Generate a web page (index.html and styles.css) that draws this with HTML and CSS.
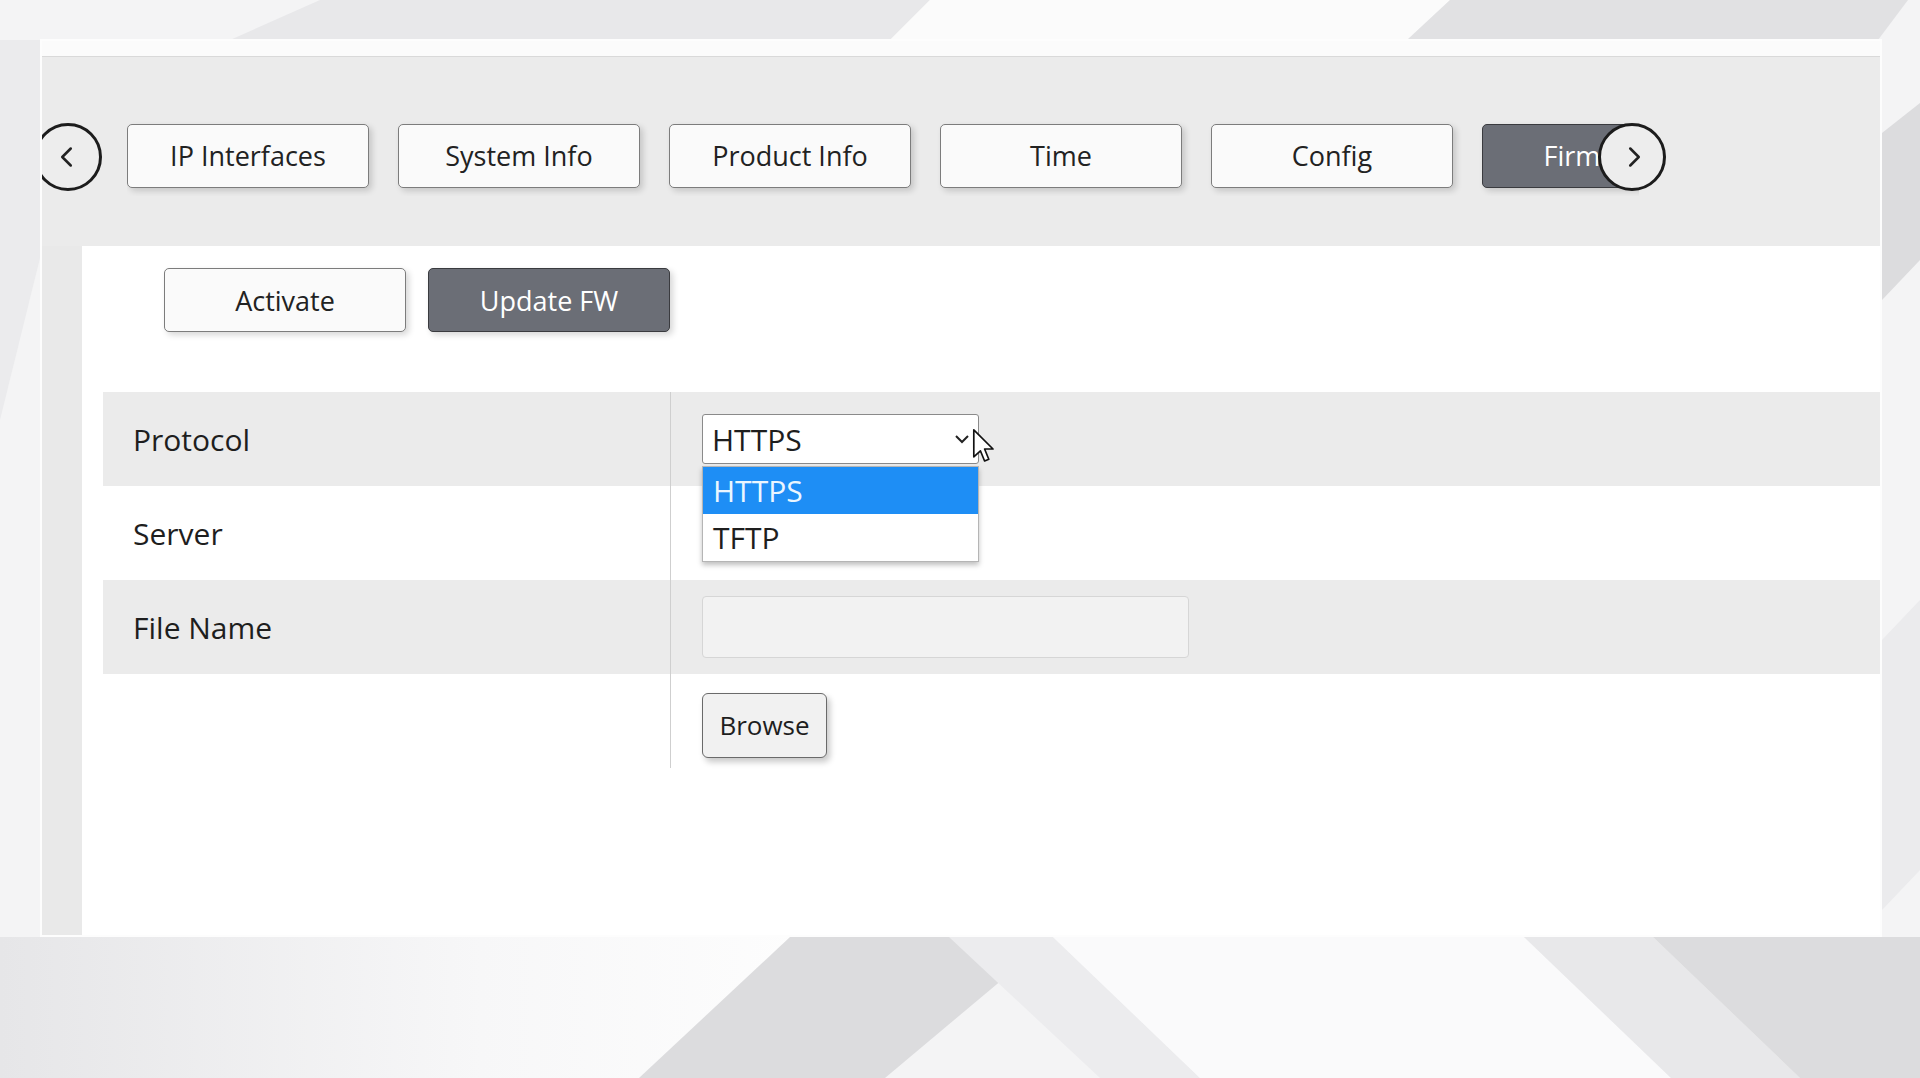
FILE: index.html
```html
<!DOCTYPE html>
<html lang="en">
<head>
  <meta charset="UTF-8" />
  <title>Firmware</title>
  <link rel="stylesheet" href="styles.css">
</head>
<body>
  <!-- decorative backdrop behind the panel -->
  <svg class="backdrop" viewBox="0 0 1920 1078" preserveAspectRatio="none">
    <defs>
      <linearGradient id="fadeL" x1="0" x2="1" y1="0" y2="0">
        <stop offset="0" stop-color="#e6e6e8"/>
        <stop offset="0.6" stop-color="#f7f7f8"/>
        <stop offset="1" stop-color="#fdfdfd"/>
      </linearGradient>
    </defs>
    <rect width="1920" height="1078" fill="#f4f4f5"/>
    <polygon points="230,40 320,0 930,0 890,40" fill="#e8e8ea"/>
    <polygon points="890,40 930,0 1450,0 1407,40" fill="#fbfbfb"/>
    <polygon points="1407,40 1450,0 1908,0 1878,40" fill="#e1e1e3"/>
    <polygon points="1882,133 1920,103 1920,260 1882,300" fill="#dcdcde"/>
    <polygon points="1882,640 1920,600 1920,870 1882,910" fill="#ebebed"/>
    <polygon points="0,40 42,40 42,250 0,420" fill="#ebebed"/>
    <rect x="0" y="937" width="800" height="141" fill="url(#fadeL)"/>
    <polygon points="790,937 1053,937 885,1078 639,1078" fill="#dcdcde"/>
    <polygon points="949,937 1053,937 1200,1078 1100,1078" fill="#ececee"/>
    <polygon points="1053,937 1524,937 1671,1078 1200,1078" fill="#fafafb"/>
    <polygon points="1524,937 1653,937 1800,1078 1671,1078" fill="#e8e8ea"/>
    <polygon points="1653,937 1920,937 1920,1078 1800,1078" fill="#dcdcde"/>
  </svg>

  <div class="panel">
    <div class="panel-top"></div>

    <div class="tabbar">
      <button class="nav-circle nav-prev" title="Previous">
        <svg viewBox="0 0 20 28" width="17" height="24"><polyline points="15,4 5,14 15,24" fill="none" stroke="#222" stroke-width="3" stroke-linecap="round" stroke-linejoin="round"/></svg>
      </button>
      <div class="tabs-viewport">
        <div class="tabs">
          <button class="tab">IP Interfaces</button>
          <button class="tab">System Info</button>
          <button class="tab">Product Info</button>
          <button class="tab">Time</button>
          <button class="tab">Config</button>
          <button class="tab active">Firmware</button>
        </div>
      </div>
      <button class="nav-circle nav-next" title="Next">
        <svg viewBox="0 0 20 28" width="17" height="24"><polyline points="5,4 15,14 5,24" fill="none" stroke="#222" stroke-width="3" stroke-linecap="round" stroke-linejoin="round"/></svg>
      </button>
    </div>

    <div class="content">
      <div class="main">
        <div class="subtabs">
          <button class="tab">Activate</button>
          <button class="tab active">Update FW</button>
        </div>

        <div class="form">
          <div class="row shaded">
            <div class="label">Protocol</div>
            <div class="value">
              <div class="select-wrap">
                <div class="select">
                  <span>HTTPS</span>
                  <svg viewBox="0 0 16 10" width="16" height="10"><polyline points="2,2 8,8 14,2" fill="none" stroke="#222" stroke-width="2"/></svg>
                </div>
                <ul class="options">
                  <li class="selected">HTTPS</li>
                  <li>TFTP</li>
                </ul>
                <svg class="cursor" viewBox="0 0 20 30" width="24" height="36">
                  <path d="M1.5 1.5 L1.5 24 L7 19 L10.5 27.5 L14 26 L10.5 17.5 L17.5 17.5 Z" fill="#fff" stroke="#111" stroke-width="1.4" stroke-linejoin="round"/>
                </svg>
              </div>
            </div>
          </div>
          <div class="row">
            <div class="label">Server</div>
            <div class="value"></div>
          </div>
          <div class="row shaded">
            <div class="label">File Name</div>
            <div class="value"><input class="text-input" type="text"></div>
          </div>
          <div class="row">
            <div class="label"></div>
            <div class="value"><button class="browse-btn">Browse</button></div>
          </div>
        </div>
      </div>
    </div>
  </div>
</body>
</html>
```

FILE: styles.css
```css
body {
  margin: 0;
  width: 1920px;
  height: 1078px;
  overflow: hidden;
  position: relative;
  background: #f4f4f5;
  font-family: "Open Sans", "Noto Sans", sans-serif;
  color: #1e1e1e;
}
.backdrop {
  position: absolute;
  top: 0;
  left: 0;
  width: 1920px;
  height: 1078px;
  z-index: 0;
}
.panel {
  position: relative;
  z-index: 1;
  margin: 39px 0 0 40px;
  width: 1842px;
  height: 898px;
  box-sizing: border-box;
  border: 2px solid #fdfdfd;
  background: #e9e9e9;
  display: flex;
  flex-direction: column;
  overflow: hidden;
}
.panel-top {
  height: 15px;
  background: #fbfbfb;
  border-bottom: 1px solid #d9d9d9;
}
.tabbar {
  height: 189px;
  box-sizing: border-box;
  padding-top: 10px;
  background: #ebebeb;
  display: flex;
  align-items: center;
  overflow: hidden;
}
.nav-circle {
  flex: none;
  width: 68px;
  height: 68px;
  border-radius: 50%;
  border: 3px solid #1c1c1c;
  background: #ededed;
  display: flex;
  align-items: center;
  justify-content: center;
  padding: 0;
  position: relative;
  z-index: 2;
  cursor: pointer;
}
.nav-prev {
  margin-left: -8px;
}
.nav-prev svg {
  margin-left: -4px;
}
.nav-next {
  margin-left: -41px;
}
.nav-next svg {
  margin-left: 4px;
}
.tabs-viewport {
  margin-left: 25px;
  width: 1512px;
  overflow: hidden;
  padding: 6px 0 8px;
}
.tabs {
  display: flex;
  gap: 29px;
}
.tab {
  flex: none;
  width: 242px;
  height: 64px;
  box-sizing: border-box;
  border: 1px solid #7c7c7c;
  border-radius: 5px;
  background: #fafafa;
  box-shadow: 3px 3px 6px rgba(0, 0, 0, 0.16);
  font-family: "Open Sans", "Noto Sans", sans-serif;
  font-size: 27px;
  color: #222;
  padding: 0;
  cursor: pointer;
}
.tab.active {
  background: #6b6e76;
  border-color: #3a3b3f;
  color: #fff;
}
.content {
  flex: 1;
  display: flex;
  padding-left: 40px;
  background: #e9e9e9;
}
.main {
  flex: 1;
  background: #fff;
  padding-top: 22px;
}
.subtabs {
  display: flex;
  gap: 22px;
  margin-left: 82px;
}
.form {
  margin: 60px 0 0 21px;
}
.row {
  display: flex;
  height: 94px;
}
.row.shaded {
  background: #ebebeb;
}
.label {
  width: 567px;
  flex: none;
  box-sizing: border-box;
  padding-left: 30px;
  display: flex;
  align-items: center;
  font-size: 30px;
  color: #1e1e1e;
}
.value {
  flex: 1;
  border-left: 1px solid #cfcfcf;
  padding-left: 31px;
  display: flex;
  align-items: center;
}
.select-wrap {
  position: relative;
  width: 277px;
}
.select {
  height: 50px;
  box-sizing: border-box;
  border: 1px solid #8a8a8a;
  border-radius: 3px;
  background: #fff;
  display: flex;
  align-items: center;
  justify-content: space-between;
  padding: 0 8px 0 9px;
  font-size: 30px;
}
.options {
  position: absolute;
  top: 52px;
  left: 0;
  width: 277px;
  box-sizing: border-box;
  margin: 0;
  padding: 0;
  list-style: none;
  background: #fff;
  border: 1px solid #b5b5b5;
  box-shadow: 0 3px 5px rgba(0, 0, 0, 0.25);
  z-index: 3;
}
.options li {
  height: 47px;
  line-height: 47px;
  padding-left: 10px;
  font-size: 30px;
  color: #1e1e1e;
}
.options li.selected {
  background: #1e8ef5;
  color: #eaf6ff;
}
.cursor {
  position: absolute;
  top: 14px;
  left: 270px;
  z-index: 4;
}
.text-input {
  width: 487px;
  height: 62px;
  box-sizing: border-box;
  border: 1px solid #d6d6d6;
  border-radius: 4px;
  background: #f2f2f2;
}
.browse-btn {
  width: 125px;
  height: 65px;
  margin-top: 8px;
  border: 1px solid #6a6a6a;
  border-radius: 6px;
  background: #f1f1f1;
  box-shadow: 3px 4px 6px rgba(0, 0, 0, 0.22);
  font-family: "Open Sans", "Noto Sans", sans-serif;
  font-size: 26px;
  color: #1e1e1e;
  padding: 0;
  cursor: pointer;
}
```
